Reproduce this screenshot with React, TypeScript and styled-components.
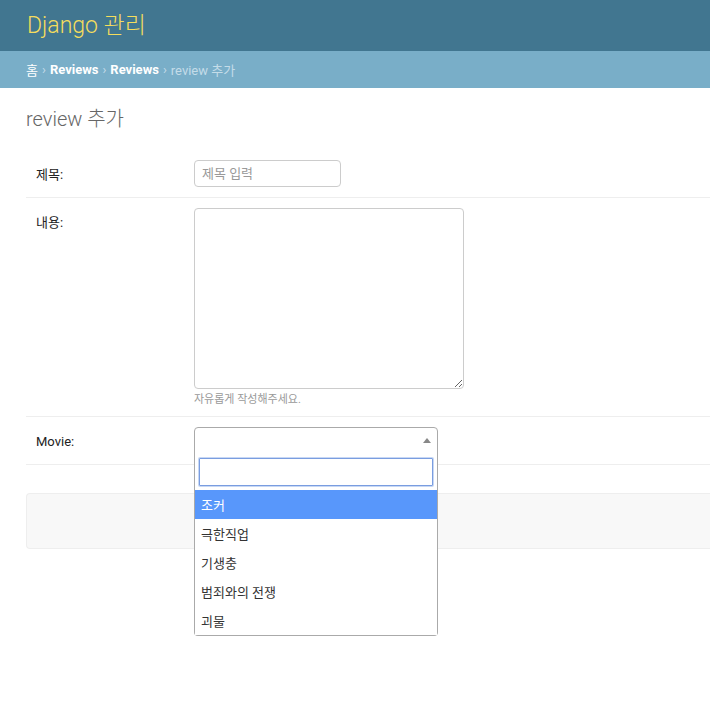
import styled, { createGlobalStyle } from 'styled-components';

const GlobalStyle = createGlobalStyle`
    html, body {
        margin: 0;
        padding: 0;
        background: #fff;
    }
    #root {
        min-height: 100vh;
    }
    body {
        font-family: Roboto, "Noto Sans CJK KR", "Liberation Sans", sans-serif;
        color: #333;
        font-size: 14px;
    }
`;

const Header = styled.div`
    height: 51px;
    background: #417690;
    padding: 0 27px;
    display: flex;
    align-items: center;
    box-sizing: border-box;
`;

const Branding = styled.h1`
    margin: 0 0 6px;
    font-size: 23px;
    font-weight: 300;
    color: #f5dd5d;
`;

const Breadcrumbs = styled.div`
    background: #79aec8;
    height: 37px;
    padding: 0 26px;
    display: flex;
    align-items: center;
    gap: 4px;
    font-size: 13px;
    color: #c4dce8;
    box-sizing: border-box;
`;

const Crumb = styled.a<{ $bold?: boolean }>`
    color: #fff;
    text-decoration: none;
    font-weight: ${(p) => (p.$bold ? 700 : 400)};
`;

const Content = styled.div`
    padding: 20px 0 180px 26px;
`;

const PageTitle = styled.h1`
    margin: 0 0 20px;
    font-size: 20px;
    line-height: 22px;
    font-weight: 300;
    color: #666;
`;

const FormRow = styled.div`
    display: flex;
    padding: 10px 0;
    border-bottom: 1px solid #eee;
`;

const Label = styled.label<{ $offset?: number }>`
    width: 158px;
    padding: ${(p) => p.$offset ?? 4}px 0 0 10px;
    font-size: 13px;
    font-weight: 400;
    color: #222;
`;

const Field = styled.div`
    position: relative;
    display: flex;
    flex-direction: column;
`;

const TextInput = styled.input`
    width: 147px;
    height: 27px;
    box-sizing: border-box;
    border: 1px solid #ccc;
    border-radius: 4px;
    padding: 0 7px;
    font-family: inherit;
    font-size: 13px;
    color: #333;
    &::placeholder {
        color: #999;
    }
`;

const TextArea = styled.textarea`
    width: 270px;
    height: 181px;
    box-sizing: border-box;
    border: 1px solid #ccc;
    border-radius: 4px;
    display: block;
    font-family: inherit;
`;

const Help = styled.div`
    margin-top: 4px;
    font-size: 11px;
    line-height: 13px;
    color: #999;
`;

const SelectBox = styled.div`
    width: 244px;
    height: 27px;
    box-sizing: border-box;
    border: 1px solid #aaa;
    border-radius: 4px 4px 0 0;
    position: relative;
    background: #fff;
`;

const Arrow = styled.span`
    position: absolute;
    right: 6px;
    top: 10px;
    border-style: solid;
    border-width: 0 4px 5px 4px;
    border-color: transparent transparent #888 transparent;
`;

const Dropdown = styled.div`
    position: absolute;
    top: 26px;
    left: 0;
    width: 244px;
    box-sizing: border-box;
    border: 1px solid #aaa;
    border-top: none;
    border-radius: 0 0 4px 4px;
    background: #fff;
    z-index: 10;
`;

const SearchWrap = styled.div`
    padding: 5px 4px 4px;
`;

const SearchInput = styled.input`
    width: 100%;
    height: 28px;
    box-sizing: border-box;
    border: 1px solid #7a9de0;
    box-shadow: 0 0 0 1px #c8d8f4;
    border-radius: 1px;
    outline: none;
`;

const Option = styled.div<{ $active?: boolean }>`
    height: 29px;
    padding: 0 6px;
    display: flex;
    align-items: center;
    font-size: 13px;
    background: ${(p) => (p.$active ? '#5897fb' : '#fff')};
    color: ${(p) => (p.$active ? '#fff' : '#333')};
    &:first-of-type {
        height: 30px;
    }
`;

const SubmitRow = styled.div`
    margin-top: 28px;
    height: 56px;
    box-sizing: border-box;
    background: #f8f8f8;
    border: 1px solid #eee;
    border-right: none;
    border-radius: 4px 0 0 4px;
`;

const movies = ['조커', '극한직업', '기생충', '범죄와의 전쟁', '괴물'];

const App = () => {
    return (
        <>
            <GlobalStyle />
            <Header>
                <Branding>Django 관리</Branding>
            </Header>
            <Breadcrumbs>
                <Crumb href="#">홈</Crumb>›
                <Crumb href="#" $bold>Reviews</Crumb>›
                <Crumb href="#" $bold>Reviews</Crumb>›
                <span>review 추가</span>
            </Breadcrumbs>
            <Content>
                <PageTitle>review 추가</PageTitle>
                <div>
                    <FormRow>
                        <Label>제목:</Label>
                        <Field>
                            <TextInput placeholder="제목 입력" />
                        </Field>
                    </FormRow>
                    <FormRow>
                        <Label>내용:</Label>
                        <Field>
                            <TextArea />
                            <Help>자유롭게 작성해주세요.</Help>
                        </Field>
                    </FormRow>
                    <FormRow>
                        <Label $offset={7}>Movie:</Label>
                        <Field>
                            <SelectBox>
                                <Arrow />
                            </SelectBox>
                            <Dropdown>
                                <SearchWrap>
                                    <SearchInput />
                                </SearchWrap>
                                {movies.map((m, i) => (
                                    <Option key={m} $active={i === 0}>{m}</Option>
                                ))}
                            </Dropdown>
                        </Field>
                    </FormRow>
                </div>
                <SubmitRow />
            </Content>
        </>
    );
};

export default App;
